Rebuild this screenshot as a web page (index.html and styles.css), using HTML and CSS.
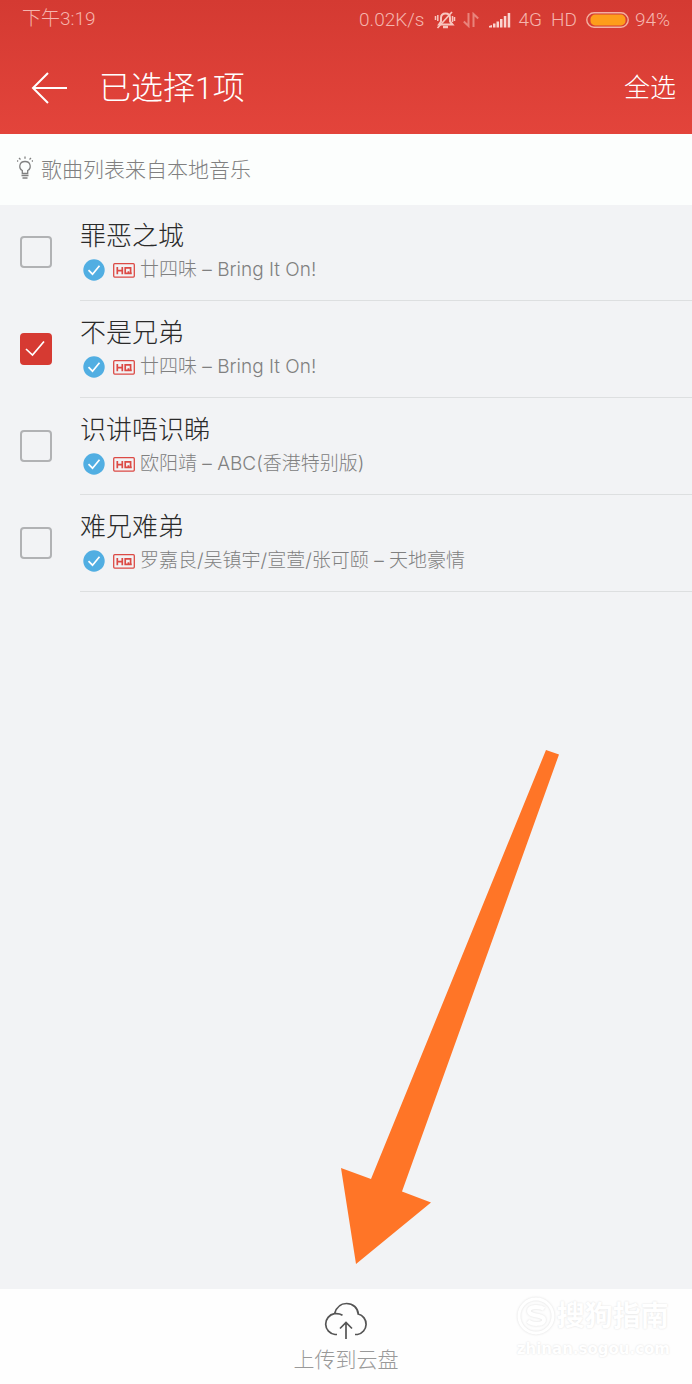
FILE: index.html
```html
<!DOCTYPE html>
<html lang="zh-CN">
<head>
<meta charset="utf-8">
<meta name="viewport" content="width=device-width, initial-scale=1">
<title>已选择1项</title>
<link rel="stylesheet" href="styles.css">
</head>
<body>
<svg class="defs" aria-hidden="true">
  <symbol id="verified" viewBox="0 0 22 22"><circle cx="11" cy="11" r="10.7" fill="#51aee2"/><path d="M5.5 11.2l4 4 7-8.5" fill="none" stroke="#fff" stroke-width="1.7"/></symbol>
  <symbol id="hq" viewBox="0 0 22 15"><g fill="none" stroke="#dc4a45"><rect x=".7" y=".7" width="20.6" height="13.4" rx="1" stroke-width="1.3"/><path d="M4.3 4v7.2M9.3 4v7.2M4.3 7.6h5M12.2 4.8h5.4v5.6h-5.4zM15.4 8.2v2.2h3.4" stroke-width="1.7"/></g></symbol>
</svg>
<div class="screen">
  <header class="top">
    <div class="status">
      <span class="time">下午3:19</span>
      <span>0.02K/s</span>
      <svg class="bell" viewBox="0 0 22 20" fill="none" stroke="currentColor"><path d="M5 14.5l2-3V8c0-3 2-4.500 4.500-4.500S16 5 16 8v3.500l2.500 3z" stroke-width="2"/><path d="M9 17h5" stroke-width="2.500"/><path d="M3.500 18L18 2" stroke-width="1.700"/><path d="M3.800 5v6M1.500 6v4M18.500 6v6M20.500 7v4" stroke-width="1.500"/></svg>
      <svg class="data" viewBox="0 0 16 16" fill="none" stroke="currentColor" stroke-width="2"><path d="M5.500 1v13L.8 9.500M10.500 15V2l4.700 4.500"/></svg>
      <svg class="signal" viewBox="0 0 22 16" fill="currentColor"><path d="M0 15.500h3V13L0 14zM4 11.500h2.500v4H4zM7.500 9.500H10v6H7.500zM11 7h2.500v8.500H11zM14.800 4h2.500v11.500h-2.500zM18.700 1h2.500v14.500h-2.500z"/></svg>
      <span>4G</span>
      <span class="hd">HD</span>
      <svg class="battery" viewBox="0 0 43 16"><rect x=".8" y=".8" width="41.400" height="14.400" rx="7.200" fill="none" stroke="#f3b0a0" stroke-width="1.400"/><rect x="4.500" y="2.600" width="35" height="10.800" rx="4.500" fill="#fe9d1b"/></svg>
      <span>94%</span>
    </div>
    <div class="bar">
      <button class="back" type="button" aria-label="返回"><svg viewBox="0 0 36 32" fill="none" stroke="currentColor" stroke-width="2"><path d="M17 1L2 16l15 15M2 16h34"/></svg></button>
      <h1 class="title">已选择1项</h1>
      <button class="all" type="button">全选</button>
    </div>
  </header>
  <p class="hint">
    <svg class="bulb" viewBox="0 0 16 24" fill="none" stroke="currentColor" stroke-width="1.300"><path d="M5.300 17.500v-3C1.500 12.500 1.800 5.500 8 5.500s6.500 7 2.700 9v3z"/><path d="M4.500 19.500h7M5.500 22h5"/><path d="M8 .5v2.300M2 2l1.500 1.500M14 2l-1.500 1.500M0 5h1.200M14.800 5H16"/></svg>
    歌曲列表来自本地音乐
  </p>
  <main class="content">
    <ul class="songs">
      <li class="song"><input class="check" type="checkbox" id="s1"><label class="info" for="s1"><span class="name">罪恶之城</span><span class="meta"><svg class="ok"><use href="#verified"/></svg><svg class="hq"><use href="#hq"/></svg>廿四味 – Bring It On!</span></label></li>
      <li class="song"><input class="check" type="checkbox" id="s2" checked><label class="info" for="s2"><span class="name">不是兄弟</span><span class="meta"><svg class="ok"><use href="#verified"/></svg><svg class="hq"><use href="#hq"/></svg>廿四味 – Bring It On!</span></label></li>
      <li class="song"><input class="check" type="checkbox" id="s3"><label class="info" for="s3"><span class="name">识讲唔识睇</span><span class="meta"><svg class="ok"><use href="#verified"/></svg><svg class="hq"><use href="#hq"/></svg>欧阳靖 – ABC(香港特别版)</span></label></li>
      <li class="song"><input class="check" type="checkbox" id="s4"><label class="info" for="s4"><span class="name">难兄难弟</span><span class="meta"><svg class="ok"><use href="#verified"/></svg><svg class="hq"><use href="#hq"/></svg>罗嘉良/吴镇宇/宣萱/张可颐 – 天地豪情</span></label></li>
    </ul>
    <svg class="arrow" viewBox="0 0 90 514" aria-hidden="true"><path d="M205 0l13 4.500L61 441.500l29 11L15 514 0 418l30 11z" fill="#ff7527"/></svg>
  </main>
  <footer class="bottom">
    <button class="upload" type="button">
      <svg class="cloud" viewBox="0 0 46 38" fill="none" stroke="#555" stroke-width="1.700"><path d="M14 32.500H12A10.500 10.500 0 0 1 11.500 11.700C13.500 5 18 1.500 23.500 1.500c6.500 0 11.500 4.500 11.700 10.500A10.500 10.500 0 0 1 34.500 32.500H32M11.500 11.700c3-.3 5.500 0 8 1.500"/><path d="M23 37V20.500M17 26.500l6-6 6 6"/></svg>
      上传到云盘
    </button>
    <div class="mark">
      <svg class="logo" viewBox="0 0 40 40" fill="none" stroke="currentColor"><circle cx="19" cy="19" r="17" stroke-width="3"/><path d="M27 12c-4-3-15-3-15 2 0 6 15 3 15 9 0 5-12 5-16 1" stroke-width="4"/></svg>
      <span class="brand">搜狗指南</span>
      <span class="site">zhinan.sogou.com</span>
    </div>
  </footer>
</div>
</body>
</html>
```

FILE: styles.css
```css
* { box-sizing: border-box; }
body {
  margin: 0;
  font-family: Roboto, "Noto Sans CJK SC", sans-serif;
  font-weight: 300;
  background: #f2f3f5;
}
button {
  border: 0;
  padding: 0;
  background: none;
  color: inherit;
  font: inherit;
}
svg { display: block; flex: none; }
.defs { position: absolute; width: 0; height: 0; }
.screen {
  display: flex;
  flex-direction: column;
  min-height: 100vh;
}
.top {
  height: 134px;
  color: #fff;
  background: linear-gradient(#d43a32, #e3443b);
}
.status {
  display: flex;
  align-items: center;
  height: 40px;
  padding: 0 22px;
  color: #f5b5ae;
  font-size: 19px;
  line-height: 24px;
}
.time { margin-right: auto; padding-bottom: 2px; }
.bell { width: 22px; height: 20px; margin-left: 10px; color: #f8c6bf; }
.data { width: 16px; height: 16px; margin-left: 7px; color: #e9837b; }
.signal { width: 22px; height: 16px; margin: 0 7px 0 10px; color: #fbd5d0; }
.hd { margin: 0 9px; }
.battery { width: 43px; height: 16px; margin-right: 6px; }
.bar {
  display: flex;
  align-items: center;
  height: 96px;
  padding: 0 16px 0 31px;
}
.back { color: #fff; }
.back svg { width: 36px; height: 32px; }
.title {
  flex: 1;
  margin: 0 0 0 32px;
  font-size: 32px;
  font-weight: 300;
  line-height: 40px;
}
.all { font-size: 26px; line-height: 40px; }
.hint {
  display: flex;
  align-items: center;
  gap: 8px;
  height: 71px;
  margin: 0;
  padding: 0 17px 4px;
  color: #808080;
  background: #fcfefd;
  font-size: 21px;
}
.bulb { width: 16px; height: 24px; }
.content {
  position: relative;
  flex: 1;
  overflow: hidden;
}
.songs { margin: -1px 0 0; padding: 0; list-style: none; }
.song {
  display: flex;
  align-items: center;
  height: 97px;
  padding-left: 20px;
}
.check {
  appearance: none;
  width: 32px;
  height: 32px;
  margin: 0 28px 2px 0;
  border: 2px solid #b1b2b4;
  border-radius: 4px;
}
.check:checked {
  border-color: #d63a32;
  background: #d63a32 url("data:image/svg+xml,%3Csvg xmlns='http://www.w3.org/2000/svg' viewBox='0 0 28 28'%3E%3Cpath d='M4 14l6.500 6L22 6.500' fill='none' stroke='white' stroke-width='1.700'/%3E%3C/svg%3E");
}
.info {
  display: flex;
  flex: 1;
  flex-direction: column;
  height: 97px;
  padding-top: 13px;
  border-bottom: 1px solid #dddfe0;
}
.name { color: #2a2a2a; font-size: 26px; line-height: 38px; }
.meta {
  display: flex;
  align-items: center;
  padding-left: 3px;
  color: #808080;
  font-family: Inter, "Noto Sans CJK SC", sans-serif;
  font-size: 19px;
  line-height: 30px;
  white-space: pre;
}
.ok { width: 22px; height: 22px; margin-right: 8px; }
.hq { width: 22px; height: 15px; margin-right: 5px; }
.arrow {
  position: absolute;
  left: 49.3%;
  bottom: 25px;
  width: 90px;
  height: 514px;
  overflow: visible;
}
.bottom {
  position: relative;
  display: flex;
  justify-content: center;
  height: 95px;
  background: #fefefe;
}
.upload {
  display: flex;
  flex-direction: column;
  align-items: center;
  padding-top: 13px;
  color: #999;
  font-size: 21px;
  line-height: 40px;
}
.cloud { width: 46px; height: 38px; }
.mark {
  position: absolute;
  top: 8px;
  right: 22px;
  display: grid;
  grid-template-columns: 40px auto;
  align-items: center;
  color: #fff;
  text-shadow: 0 0 2px #ddd;
}
.logo { width: 40px; height: 40px; filter: drop-shadow(0 0 1px #ddd); }
.brand { font-size: 28px; font-weight: 700; line-height: 40px; }
.site {
  grid-column: 1 / -1;
  font-family: "DejaVu Sans", sans-serif;
  font-size: 15px;
  font-weight: 700;
  line-height: 24px;
}
```
